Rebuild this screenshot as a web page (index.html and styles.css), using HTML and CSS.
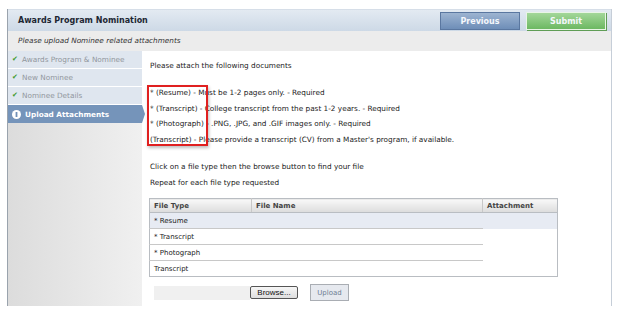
FILE: index.html
```html
<!DOCTYPE html>
<html lang="en">
<head>
    <meta charset="UTF-8">
    <title>Awards Program Nomination</title>
    <link rel="stylesheet" href="styles.css">
</head>
<body>
    <div class="frame">
        <div class="header">
            <div class="title">Awards Program Nomination</div>
            <div class="actions">
                <button class="btn btn-prev">Previous</button>
                <button class="btn btn-submit">Submit</button>
            </div>
        </div>
        <div class="subheader">Please upload Nominee related attachments</div>

        <div class="main">
            <!-- steps -->
            <div class="sidebar">
                <div class="step done"><span class="check">&#10004;</span>Awards Program &amp; Nominee</div>
                <div class="step done"><span class="check">&#10004;</span>New Nominee</div>
                <div class="step done"><span class="check">&#10004;</span>Nominee Details</div>
                <div class="step active">
                    <svg class="dot" width="9" height="9" viewBox="0 0 9 9">
                        <circle cx="4.5" cy="4.5" r="4.5" fill="#fff"/>
                        <rect x="3.6" y="2" width="1.8" height="5" fill="#6f8fb6"/>
                    </svg>
                    Upload Attachments
                </div>
            </div>

            <!-- content -->
            <div class="content">
                <p class="intro">Please attach the following documents</p>

                <div class="doc-list">
                    <p>* (Resume) - Must be 1-2 pages only. - Required</p>
                    <p>* (Transcript) - College transcript from the past 1-2 years. - Required</p>
                    <p>* (Photograph) - .PNG, .JPG, and .GIF images only. - Required</p>
                    <p>(Transcript) - Please provide a transcript (CV) from a Master's program, if available.</p>
                    <div class="highlight"></div>
                </div>

                <p class="hint">Click on a file type then the browse button to find your file</p>
                <p class="hint">Repeat for each file type requested</p>

                <table class="files">
                    <thead>
                        <tr>
                            <th class="col-type">File Type</th>
                            <th class="col-name">File Name</th>
                            <th class="col-att">Attachment</th>
                        </tr>
                    </thead>
                    <tbody>
                        <tr class="selected">
                            <td class="cell">* Resume</td>
                            <td class="cell"></td>
                            <td></td>
                        </tr>
                        <tr>
                            <td class="cell">* Transcript</td>
                            <td class="cell"></td>
                            <td></td>
                        </tr>
                        <tr>
                            <td class="cell">* Photograph</td>
                            <td class="cell"></td>
                            <td></td>
                        </tr>
                        <tr>
                            <td class="cell last">Transcript</td>
                            <td class="cell last"></td>
                            <td></td>
                        </tr>
                    </tbody>
                </table>

                <div class="upload-row">
                    <span class="file-box"></span>
                    <button class="browse">Browse...</button>
                    <button class="upload">Upload</button>
                </div>
            </div>
        </div>
    </div>
</body>
</html>
```

FILE: styles.css
```css
body {
    margin: 0;
    background: #fff;
    font-family: 'DejaVu Sans', Verdana, sans-serif;
    font-size: 7.3px;
    color: #222;
}

.frame {
    margin: 9px 8px 0 7px;
    width: 603px;
    border-left: 1px solid #9aa3ad;
    border-right: 1px solid #c6ced8;
}

/* header bar */
.header {
    height: 21px;
    display: flex;
    align-items: center;
    justify-content: space-between;
    padding: 0 5px 0 10px;
    background: linear-gradient(#e3eaf2, #cdd9e6);
    border-top: 1px solid #d6dee8;
}

.title {
    font-weight: bold;
    font-size: 8px;
    color: #1d2733;
}

.actions {
    display: flex;
    gap: 6px;
    margin-top: 1px;
}

.btn {
    width: 80px;
    height: 18px;
    font-family: 'DejaVu Sans', Verdana, sans-serif;
    font-size: 8px;
    font-weight: bold;
    color: #f4f7fb;
    cursor: pointer;
    padding: 0;
}

.btn-prev {
    background: linear-gradient(#9db4d1, #6e8eb8);
    border: 1px solid #5a77a0;
}

.btn-submit {
    background: linear-gradient(#a3d79a, #6cb862);
    border: 1px solid #e9f5e6;
    box-shadow: 1px 1px 0 #5f9d56;
}

.subheader {
    height: 20px;
    line-height: 20px;
    padding-left: 10px;
    background: #ececec;
    font-style: italic;
    color: #333;
}

.main {
    display: flex;
    height: 255px;
}

/* steps */
.sidebar {
    width: 134px;
    background: linear-gradient(90deg, #dcdcdc, #f0f0f0);
}

.step {
    height: 17px;
    line-height: 17px;
    padding-left: 4px;
    background: #dfe6ef;
    border-bottom: 1px solid #fff;
    color: #91969d;
    display: flex;
    align-items: center;
    gap: 1px;
}

.check {
    color: #3f9a2b;
    font-size: 7px;
    width: 9px;
}

.step.active {
    position: relative;
    height: 18px;
    background: #7594ba;
    color: #fff;
    font-weight: bold;
    border-bottom: none;
    gap: 4px;
}

.step.active::after {
    content: '';
    position: absolute;
    right: -3px;
    top: 0;
    border-top: 9px solid transparent;
    border-bottom: 9px solid transparent;
    border-left: 3px solid #7594ba;
}

/* content */
.content {
    flex: 1;
    padding: 10px 0 0 8px;
    background: #fff;
}

.content p {
    margin: 0;
}

.intro {
    height: 24px;
    line-height: 10px;
}

.doc-list {
    position: relative;
    margin-bottom: 12px;
}

.doc-list p {
    height: 15.5px;
    line-height: 15.5px;
}

.highlight {
    position: absolute;
    left: -3px;
    top: 0;
    width: 57px;
    height: 57px;
    border: 2px solid #e02020;
    box-shadow: 1px 2px 3px rgba(0,0,0,0.25);
}

.hint {
    height: 16px;
    line-height: 16px;
}

.files {
    margin: 7px 0 0 -1px;
    width: 409px;
    border-collapse: collapse;
    border: 1px solid #b9bdc2;
    font-size: 7px;
}

.files th {
    height: 13px;
    text-align: left;
    padding: 0 4px;
    font-weight: bold;
    color: #444;
    background: linear-gradient(#f8f8f8, #dcdcdc);
    border-bottom: 1px solid #b9bdc2;
}

.col-type {
    width: 93px;
    border-right: 1px solid #c8c8c8;
}

.col-name {
    width: 222px;
    border-right: 1px solid #c8c8c8;
}

.files td {
    height: 15px;
    padding: 0 4px;
}

.files td.cell {
    border-bottom: 1px solid #c8c8c8;
}

.files td.cell.last {
    border-bottom: none;
}

.files tr.selected td {
    background: #e7ebf3;
}

.upload-row {
    display: flex;
    align-items: center;
    margin: 7px 0 0 4px;
}

.file-box {
    width: 96px;
    height: 14px;
    background: #f0f0f0;
}

.browse {
    width: 48px;
    height: 13px;
    padding: 0;
    font-family: 'Liberation Sans', Arial, sans-serif;
    font-size: 8px;
    color: #111;
    background: linear-gradient(#f6f6f6, #dedede);
    border: 1px solid #555;
    border-radius: 2px;
}

.upload {
    margin-left: 12px;
    width: 39px;
    height: 17px;
    padding: 0;
    font-family: 'DejaVu Sans', Verdana, sans-serif;
    font-size: 7px;
    color: #6d7d93;
    background: #e6e9ef;
    border: 1px solid #a9adb3;
}
```
